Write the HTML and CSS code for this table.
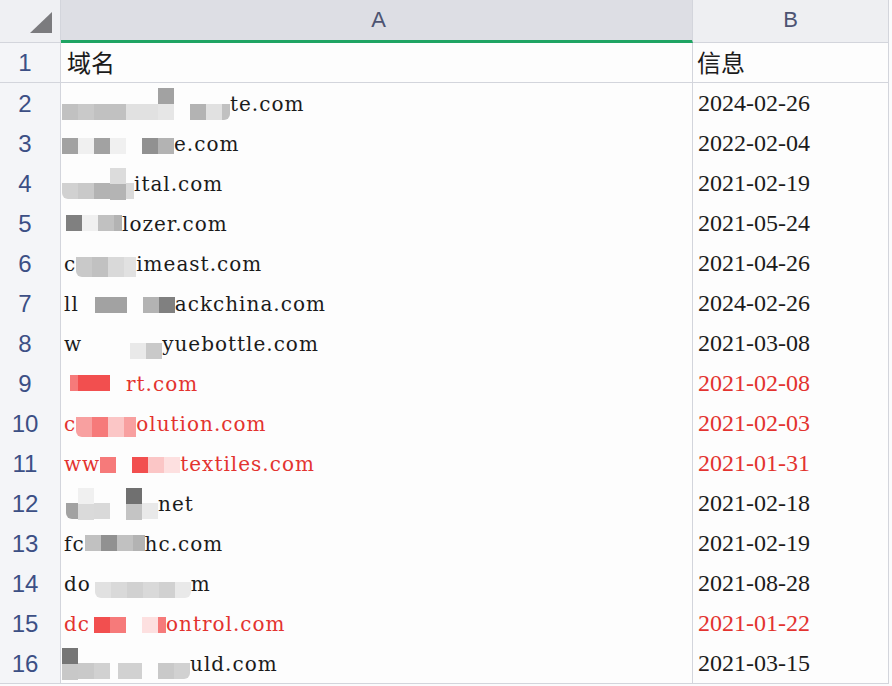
FILE: index.html
```html
<!DOCTYPE html>
<html lang="zh">
<head>
<meta charset="utf-8">
<title>域名</title>
<link rel="stylesheet" href="styles.css">
</head>
<body>
<div class="sheet">
  <div class="hrow">
    <div class="corner"><span class="tri"></span></div>
    <div class="colh sel">A</div>
    <div class="colh">B</div>
  </div>

  <div class="row">
    <div class="num">1</div>
    <div class="ca"><span class="t cjk lead">域名</span></div>
    <div class="cb cjk">信息</div>
  </div>

  <div class="row">
    <div class="num">2</div>
    <div class="ca">
      <span class="m o21 gc0"></span><span class="m o21 gc8"></span><span class="m o21 gc0"></span><span class="m o21 gc0"></span><span class="m o21 ge0"></span><span class="m o21 ge0"></span><span class="m o5 dbl d1"></span><span class="s16"></span><span class="m o21 gb0"></span><span class="m o21 ge0"></span><span class="m w8 o21 gc0 rr"></span><span class="t">te.com</span>
    </div>
    <div class="cb">2024-02-26</div>
  </div>

  <div class="row">
    <div class="num">3</div>
    <div class="ca">
      <span class="m o15 ga0"></span><span class="m o15 gf0"></span><span class="m o15 ga0"></span><span class="m o15 gf0"></span><span class="s16"></span><span class="m o15 g90"></span><span class="m o15 gb0"></span><span class="t">e.com</span>
    </div>
    <div class="cb">2022-02-04</div>
  </div>

  <div class="row">
    <div class="num">4</div>
    <div class="ca">
      <span class="m o20 gd0 rl"></span><span class="m o20 gc8"></span><span class="m o20 gb0"></span><span class="m o5 dbl d2"></span><span class="m w8 o20 gd8"></span><span class="t">ital.com</span>
    </div>
    <div class="cb">2021-02-19</div>
  </div>

  <div class="row">
    <div class="num">5</div>
    <div class="ca">
      <span class="s4"></span><span class="m o12 g80"></span><span class="m o12 gf0"></span><span class="m o12 gc0"></span><span class="m w8 o12 gb0"></span><span class="t">lozer.com</span>
    </div>
    <div class="cb">2021-05-24</div>
  </div>

  <div class="row">
    <div class="num">6</div>
    <div class="ca">
      <span class="t lead">c</span><span class="m tall o14 gc8 rl"></span><span class="m tall o14 gc0"></span><span class="m tall o14 gd8"></span><span class="m w12 tall o14 ge0"></span><span class="t">imeast.com</span>
    </div>
    <div class="cb">2021-04-26</div>
  </div>

  <div class="row">
    <div class="num">7</div>
    <div class="ca">
      <span class="t lead">ll</span><span class="s16"></span><span class="m o14 ga0"></span><span class="m o14 ga0"></span><span class="s16"></span><span class="m o14 gb0"></span><span class="m o14 g80"></span><span class="t">ackchina.com</span>
    </div>
    <div class="cb">2024-02-26</div>
  </div>

  <div class="row">
    <div class="num">8</div>
    <div class="ca">
      <span class="t lead">w</span><span class="s32"></span><span class="s16"></span><span class="m o20 ge8"></span><span class="m o20 gc8"></span><span class="t">yuebottle.com</span>
    </div>
    <div class="cb">2021-03-08</div>
  </div>

  <div class="row red">
    <div class="num">9</div>
    <div class="ca">
      <span class="s8"></span><span class="m w8 o12 r2"></span><span class="m o12 r1"></span><span class="m o12 r1"></span><span class="s16"></span><span class="t">rt.com</span>
    </div>
    <div class="cb">2021-02-08</div>
  </div>

  <div class="row red">
    <div class="num">10</div>
    <div class="ca">
      <span class="t lead">c</span><span class="m tall o14 r3 rl"></span><span class="m tall o14 r2"></span><span class="m tall o14 r4"></span><span class="m w12 tall o14 r3"></span><span class="t">olution.com</span>
    </div>
    <div class="cb">2021-02-03</div>
  </div>

  <div class="row red">
    <div class="num">11</div>
    <div class="ca">
      <span class="t lead">ww</span><span class="m o14 r2"></span><span class="s16"></span><span class="m o14 r1"></span><span class="m o14 r4"></span><span class="m o14 r5"></span><span class="t">textiles.com</span>
    </div>
    <div class="cb">2021-01-31</div>
  </div>

  <div class="row">
    <div class="num">12</div>
    <div class="ca">
      <span class="s4"></span><span class="m w12 o20 ga0 rl"></span><span class="m o5 dbl d3"></span><span class="m o20 gd8"></span><span class="s16"></span><span class="m o5 dbl d4"></span><span class="m o20 ge8"></span><span class="t">net</span>
    </div>
    <div class="cb">2021-02-18</div>
  </div>

  <div class="row">
    <div class="num">13</div>
    <div class="ca">
      <span class="t lead">fc</span><span class="m o12 gc0"></span><span class="m o12 g90"></span><span class="m o12 gc0"></span><span class="m w12 o12 gb0"></span><span class="t">hc.com</span>
    </div>
    <div class="cb">2021-02-19</div>
  </div>

  <div class="row">
    <div class="num">14</div>
    <div class="ca">
      <span class="t lead">do</span><span class="s4"></span><span class="m o19 ge0 rl"></span><span class="m o19 gd8"></span><span class="m o19 gd0"></span><span class="m o19 gd8"></span><span class="m o19 gd0"></span><span class="m o19 ge8 rr"></span><span class="t">m</span>
    </div>
    <div class="cb">2021-08-28</div>
  </div>

  <div class="row red">
    <div class="num">15</div>
    <div class="ca">
      <span class="t lead">dc</span><span class="s4"></span><span class="m o14 r1"></span><span class="m o14 r2"></span><span class="s16"></span><span class="m o14 r5"></span><span class="m w8 o14 r2"></span><span class="t">ontrol.com</span>
    </div>
    <div class="cb">2021-01-22</div>
  </div>

  <div class="row last">
    <div class="num">16</div>
    <div class="ca">
      <span class="m o5 dbl d5"></span><span class="m o20 gc8"></span><span class="m o20 gd0"></span><span class="s8"></span><span class="m o20 gd0"></span><span class="m w8 o20 gd0"></span><span class="s16"></span><span class="m o20 gc8"></span><span class="m o20 gd0 rr"></span><span class="t">uld.com</span>
    </div>
    <div class="cb">2021-03-15</div>
  </div>
</div>
</body>
</html>
```

FILE: styles.css
```css
html, body {
  margin: 0;
  padding: 0;
  background: #fbfbfc;
}
.sheet {
  width: 892px;
  height: 686px;
  overflow: hidden;
  background: #fbfbfc;
}
.hrow {
  display: grid;
  grid-template-columns: 61px 632px 196px;
  height: 43px;
}
.corner {
  background: #eff0f3;
  border-right: 1px solid #d3d5dc;
  border-bottom: 1px solid #d3d5dc;
  box-sizing: border-box;
  display: flex;
  justify-content: flex-end;
  align-items: flex-end;
  padding: 0 8px 9px 0;
}
.tri {
  width: 0;
  height: 0;
  border-left: 22px solid transparent;
  border-bottom: 21px solid #7b7b7e;
}
.colh {
  box-sizing: border-box;
  background: #eeeff2;
  border-right: 1px solid #d3d5dc;
  border-bottom: 1px solid #d3d5dc;
  font-family: "Liberation Sans", Arial, sans-serif;
  font-size: 22px;
  color: #4d5472;
  display: flex;
  justify-content: center;
  align-items: center;
  padding-bottom: 2px;
}
.colh.sel {
  background: #dddee4;
  border-bottom: 3px solid #1fa463;
  padding-bottom: 0;
  padding-left: 4px;
}
.row {
  display: grid;
  grid-template-columns: 61px 632px 196px;
  height: 40px;
}
.row > div {
  box-sizing: border-box;
  border-right: 1px solid #d3d5dc;
  border-bottom: 1px solid #d3d5dc;
}
.num {
  background: #f4f5f8;
  font-family: "Liberation Sans", Arial, sans-serif;
  font-size: 24px;
  color: #3c4f85;
  display: flex;
  justify-content: center;
  align-items: center;
  padding-right: 10px;
  padding-top: 1px;
}
.ca {
  background: #fdfdfd;
  display: flex;
  align-items: flex-start;
  padding-left: 1px;
  font-family: "DejaVu Serif", serif;
  font-size: 20px;
  letter-spacing: 1px;
  color: #1b1b1b;
  overflow: hidden;
}
.cb {
  background: #fdfdfd;
  font-family: "Liberation Serif", "Times New Roman", serif;
  font-size: 24px;
  color: #1b1b1b;
  line-height: 39px;
  padding-left: 5px;
  padding-top: 1px;
}
.t {
  line-height: 39px;
  padding-top: 2px;
  white-space: pre;
}
.lead { margin-left: 2px; }
.cjk {
  font-family: "Noto Sans CJK SC", "Noto Sans CJK JP", sans-serif;
  font-size: 24px;
  letter-spacing: 0;
}
.cb.cjk { padding-left: 4px; padding-top: 0; line-height: 38px; }
.ca .t.cjk { line-height: 38px; padding-top: 0; margin-left: 5px; }

.red .ca, .red .cb { color: #e3332f; }

/* mosaic cells */
.m {
  flex: none;
  width: 16px;
  height: 16px;
}
.w8 { width: 8px; }
.w12 { width: 12px; }
.tall { height: 20px; }
.dbl { height: 32px; }
.rl { border-bottom-left-radius: 6px; }
.rr { border-bottom-right-radius: 6px; }
.o5 { margin-top: 5px; }
.o12 { margin-top: 12px; }
.o14 { margin-top: 14px; }
.o15 { margin-top: 15px; }
.o19 { margin-top: 19px; }
.o20 { margin-top: 20px; }
.o21 { margin-top: 21px; }
.s4 { flex: none; width: 4px; }
.s8 { flex: none; width: 8px; }
.s16 { flex: none; width: 16px; }
.s32 { flex: none; width: 32px; }

.g70 { background: #727272; }
.g80 { background: #808080; }
.g90 { background: #919191; }
.ga0 { background: #a2a2a2; }
.gb0 { background: #b3b3b3; }
.gc0 { background: #c1c1c1; }
.gc8 { background: #c9c9c9; }
.gd0 { background: #d1d1d1; }
.gd8 { background: #d9d9d9; }
.ge0 { background: #e1e1e1; }
.ge8 { background: #e9e9e9; }
.gf0 { background: #f0f0f0; }

.r1 { background: #f24f4f; }
.r2 { background: #f67a7a; }
.r3 { background: #f8a0a0; }
.r4 { background: #fbc6c6; }
.r5 { background: #fde0e0; }

.d1 { background: linear-gradient(#a2a2a2 50%, #e6e6e6 50%); }
.d2 { background: linear-gradient(#dcdcdc 50%, #b4b4b4 50%); }
.d3 { background: linear-gradient(#f0f0f0 50%, #dadada 50%); }
.d4 { background: linear-gradient(#707070 50%, #c4c4c4 50%); }
.d5 { background: linear-gradient(#767676 50%, #c8c8c8 50%); }
```
